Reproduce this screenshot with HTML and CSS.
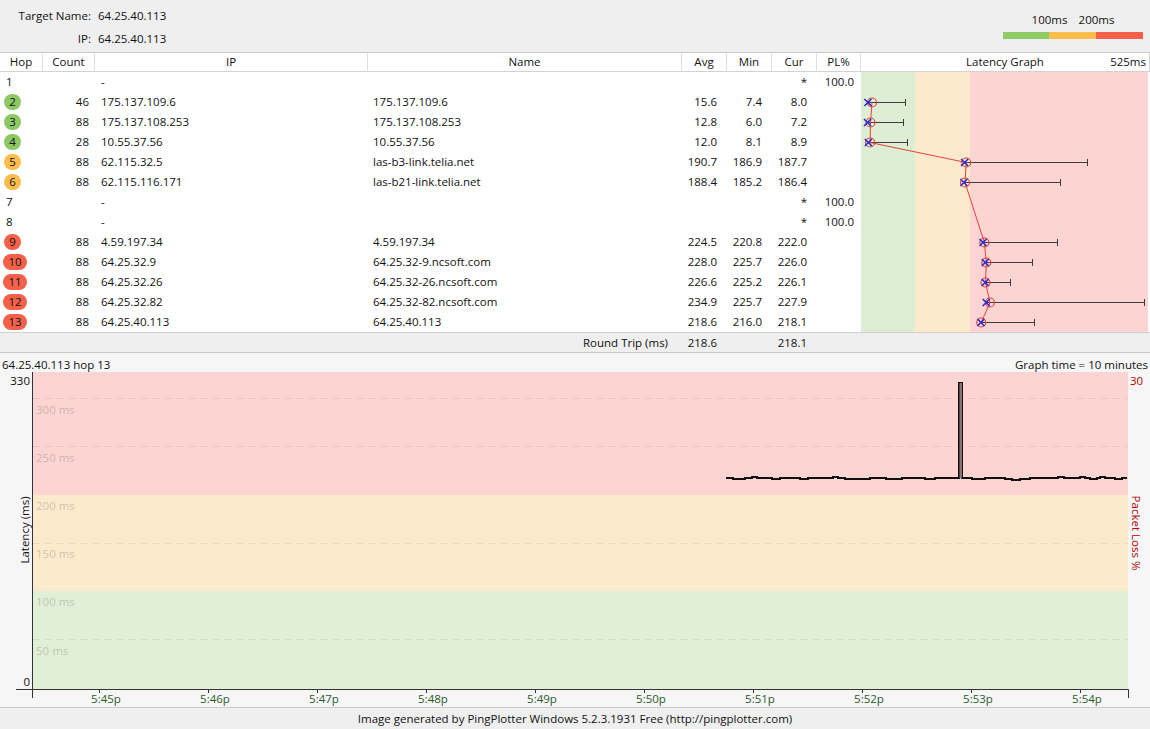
FILE: index.html
```html
<!DOCTYPE html>
<html>
<head>
<meta charset="utf-8">
<title>PingPlotter</title>
<link rel="stylesheet" href="styles.css">
</head>
<body>
<header class="top">
  <div class="target">
    <span class="lbl">Target Name:</span><span class="val">64.25.40.113</span>
    <span class="lbl">IP:</span><span class="val">64.25.40.113</span>
  </div>
  <div class="legend">
    <div class="legend-labels"><span>100ms</span><span>200ms</span></div>
    <div class="legend-bar"><i class="g"></i><i class="o"></i><i class="r"></i></div>
  </div>
</header>

<section class="trace">
  <div class="th">Hop</div>
  <div class="th">Count</div>
  <div class="th">IP</div>
  <div class="th">Name</div>
  <div class="th">Avg</div>
  <div class="th">Min</div>
  <div class="th">Cur</div>
  <div class="th">PL%</div>
  <div class="th th-graph"><span></span><span>Latency Graph</span><span class="max">525ms</span></div>

  <div class="latcell">
    <svg class="lat" width="287" height="260" viewBox="0 0 287 260">
      <rect x="0" y="0" width="54" height="260" fill="#ddeed4"/>
      <rect x="54" y="0" width="55" height="260" fill="#fde9cc"/>
      <rect x="109" y="0" width="178" height="260" fill="#fcd4d1"/>
      <g stroke="#3d3d3d" stroke-width="1" fill="none">
        <path d="M6.6 30.5H44.5M44.5 27V34"/>
        <path d="M5.8 50.5H42.5M42.5 47V54"/>
        <path d="M7 70.5H46.5M46.5 67V74"/>
        <path d="M103.2 90.5H226.5M226.5 87V94"/>
        <path d="M102.2 110.5H199.5M199.5 107V114"/>
        <path d="M121.4 170.5H196.5M196.5 167V174"/>
        <path d="M124 190.5H171.5M171.5 187V194"/>
        <path d="M123.8 210.5H149.5M149.5 207V214"/>
        <path d="M124 230.5H283.5M283.5 227V234"/>
        <path d="M118.8 250.5H173.5M173.5 247V254"/>
      </g>
      <polyline fill="none" stroke="#e8413a" stroke-width="1" points="11,30.5 9.5,50.5 9.1,70.5 105.2,90.5 104,110.5 123.4,170.5 125.3,190.5 124.5,210.5 129,230.5 120.2,250.5"/>
      <g stroke="#d9473c" stroke-width="1.2" fill="none">
        <circle cx="11" cy="30.5" r="4.5"/>
        <circle cx="9.5" cy="50.5" r="4.5"/>
        <circle cx="9.1" cy="70.5" r="4.5"/>
        <circle cx="105.2" cy="90.5" r="4.5"/>
        <circle cx="104" cy="110.5" r="4.5"/>
        <circle cx="123.4" cy="170.5" r="4.5"/>
        <circle cx="125.3" cy="190.5" r="4.5"/>
        <circle cx="124.5" cy="210.5" r="4.5"/>
        <circle cx="129" cy="230.5" r="4.5"/>
        <circle cx="120.2" cy="250.5" r="4.5"/>
      </g>
      <g stroke="#2b2bd6" stroke-width="1.6" fill="none">
        <path d="M3.4 27L10.4 34M10.4 27L3.4 34"/>
        <path d="M3 47L10 54M10 47L3 54"/>
        <path d="M3.9 67L10.9 74M10.9 67L3.9 74"/>
        <path d="M100.1 87L107.1 94M107.1 87L100.1 94"/>
        <path d="M99.4 107L106.4 114M106.4 107L99.4 114"/>
        <path d="M118.5 167L125.5 174M125.5 167L118.5 174"/>
        <path d="M120.7 187L127.7 194M127.7 187L120.7 194"/>
        <path d="M120.7 207L127.7 214M127.7 207L120.7 214"/>
        <path d="M121.7 227L128.7 234M128.7 227L121.7 234"/>
        <path d="M116.4 247L123.4 254M123.4 247L116.4 254"/>
      </g>
    </svg>
  </div>

  <div class="c-hop">1</div><div class="c-count"></div><div class="c-ip">-</div><div class="c-name"></div><div class="c-num"></div><div class="c-num"></div><div class="c-num">*</div><div class="c-pl">100.0</div>
  <div class="c-hop"><span class="badge green">2</span></div><div class="c-count">46</div><div class="c-ip">175.137.109.6</div><div class="c-name">175.137.109.6</div><div class="c-num">15.6</div><div class="c-num">7.4</div><div class="c-num">8.0</div><div class="c-pl"></div>
  <div class="c-hop"><span class="badge green">3</span></div><div class="c-count">88</div><div class="c-ip">175.137.108.253</div><div class="c-name">175.137.108.253</div><div class="c-num">12.8</div><div class="c-num">6.0</div><div class="c-num">7.2</div><div class="c-pl"></div>
  <div class="c-hop"><span class="badge green">4</span></div><div class="c-count">28</div><div class="c-ip">10.55.37.56</div><div class="c-name">10.55.37.56</div><div class="c-num">12.0</div><div class="c-num">8.1</div><div class="c-num">8.9</div><div class="c-pl"></div>
  <div class="c-hop"><span class="badge orange">5</span></div><div class="c-count">88</div><div class="c-ip">62.115.32.5</div><div class="c-name">las-b3-link.telia.net</div><div class="c-num">190.7</div><div class="c-num">186.9</div><div class="c-num">187.7</div><div class="c-pl"></div>
  <div class="c-hop"><span class="badge orange">6</span></div><div class="c-count">88</div><div class="c-ip">62.115.116.171</div><div class="c-name">las-b21-link.telia.net</div><div class="c-num">188.4</div><div class="c-num">185.2</div><div class="c-num">186.4</div><div class="c-pl"></div>
  <div class="c-hop">7</div><div class="c-count"></div><div class="c-ip">-</div><div class="c-name"></div><div class="c-num"></div><div class="c-num"></div><div class="c-num">*</div><div class="c-pl">100.0</div>
  <div class="c-hop">8</div><div class="c-count"></div><div class="c-ip">-</div><div class="c-name"></div><div class="c-num"></div><div class="c-num"></div><div class="c-num">*</div><div class="c-pl">100.0</div>
  <div class="c-hop"><span class="badge red">9</span></div><div class="c-count">88</div><div class="c-ip">4.59.197.34</div><div class="c-name">4.59.197.34</div><div class="c-num">224.5</div><div class="c-num">220.8</div><div class="c-num">222.0</div><div class="c-pl"></div>
  <div class="c-hop"><span class="badge red wide">10</span></div><div class="c-count">88</div><div class="c-ip">64.25.32.9</div><div class="c-name">64.25.32-9.ncsoft.com</div><div class="c-num">228.0</div><div class="c-num">225.7</div><div class="c-num">226.0</div><div class="c-pl"></div>
  <div class="c-hop"><span class="badge red wide">11</span></div><div class="c-count">88</div><div class="c-ip">64.25.32.26</div><div class="c-name">64.25.32-26.ncsoft.com</div><div class="c-num">226.6</div><div class="c-num">225.2</div><div class="c-num">226.1</div><div class="c-pl"></div>
  <div class="c-hop"><span class="badge red wide">12</span></div><div class="c-count">88</div><div class="c-ip">64.25.32.82</div><div class="c-name">64.25.32-82.ncsoft.com</div><div class="c-num">234.9</div><div class="c-num">225.7</div><div class="c-num">227.9</div><div class="c-pl"></div>
  <div class="c-hop"><span class="badge red wide">13</span></div><div class="c-count">88</div><div class="c-ip">64.25.40.113</div><div class="c-name">64.25.40.113</div><div class="c-num">218.6</div><div class="c-num">216.0</div><div class="c-num">218.1</div><div class="c-pl"></div>

  <div class="rt rt-label">Round Trip (ms)</div><div class="rt c-num">218.6</div><div class="rt c-num"></div><div class="rt c-num">218.1</div><div class="rt c-pl"></div><div class="rt"></div>
</section>

<section class="graph">
  <div class="graph-head"><span>64.25.40.113 hop 13</span><span>Graph time = 10 minutes</span></div>
  <svg class="chart" width="1150" height="335" viewBox="0 0 1150 335">
    <rect x="33" y="0" width="1095" height="123" fill="#fcd4d1"/>
    <rect x="33" y="123" width="1095" height="96" fill="#fde9cc"/>
    <rect x="33" y="219" width="1095" height="98" fill="#e0efd6"/>
    <g stroke="#000" stroke-opacity="0.07" stroke-width="1" stroke-dasharray="7 5">
      <path d="M33 26.5H1128"/>
      <path d="M33 74.5H1128"/>
      <path d="M33 171.5H1128"/>
      <path d="M33 267.5H1128"/>
    </g>
    <g class="gl">
      <text x="36" y="42">300 ms</text>
      <text x="36" y="90">250 ms</text>
      <text x="36" y="138">200 ms</text>
      <text x="36" y="186">150 ms</text>
      <text x="36" y="234">100 ms</text>
      <text x="36" y="283">50 ms</text>
    </g>
    <polyline fill="none" stroke="#111" stroke-width="2" points="726,106 733,106 733,107 745,107 745,106 752,106 752,105 757,105 757,106 772,106 772,107 780,107 780,106 800,106 800,107 808,107 808,106 833,106 833,105 838,105 838,106 845,106 845,107 870,107 870,106 886,106 886,107 902,107 902,106 925,106 925,107 935,107 935,106 959,106 959,11 962,11 962,106 972,106 972,107 985,107 985,106 1005,106 1005,107 1012,107 1012,108 1020,108 1020,107 1030,107 1030,106 1058,106 1058,105 1064,105 1064,106 1080,106 1080,105 1085,105 1085,106 1090,106 1090,107 1097,107 1097,106 1100,106 1100,105 1105,105 1105,106 1115,106 1115,107 1122,107 1122,106 1127,106"/>
    <rect x="959.5" y="11" width="2.5" height="95" fill="#8c7272"/>
    <g stroke="#333" stroke-width="1" fill="none">
      <path d="M32.5 0V326"/>
      <path d="M16 317.5H1128.5V326"/>
      <path d="M99.5 317V321M208.5 317V321M317.5 317V321M426.5 317V321M535.5 317V321M644.5 317V321M753.5 317V321M862.5 317V321M971.5 317V321M1080.5 317V321"/>
    </g>
    <g class="tl">
      <text x="106" y="331">5:45p</text>
      <text x="215" y="331">5:46p</text>
      <text x="324" y="331">5:47p</text>
      <text x="433" y="331">5:48p</text>
      <text x="542" y="331">5:49p</text>
      <text x="651" y="331">5:50p</text>
      <text x="760" y="331">5:51p</text>
      <text x="869" y="331">5:52p</text>
      <text x="978" y="331">5:53p</text>
      <text x="1087" y="331">5:54p</text>
    </g>
    <text class="yl" x="30" y="13">330</text>
    <text class="yl" x="30" y="314">0</text>
    <text class="axt" transform="translate(29 158) rotate(-90)">Latency (ms)</text>
    <text class="pl" x="1130" y="13">30</text>
    <text class="plt" transform="translate(1132 161) rotate(90)">Packet Loss %</text>
  </svg>
</section>

<footer class="foot">Image generated by PingPlotter Windows 5.2.3.1931 Free (http://pingplotter.com)</footer>
</body>
</html>
```

FILE: styles.css
```css
* { box-sizing: border-box; margin: 0; padding: 0; }
html, body { width: 1150px; height: 729px; overflow: hidden; }
body {
  font-family: "Open Sans", "Noto Sans", sans-serif;
  font-size: 11.5px;
  color: #111;
  background: #f6f6f6;
}

/* top header */
.top {
  height: 53px;
  background: #efefef;
  border-bottom: 1px solid #c9c9c9;
  display: flex;
  justify-content: space-between;
}
.target {
  display: grid;
  grid-template-columns: 91px auto;
  column-gap: 7px;
  row-gap: 7px;
  padding-top: 8px;
  line-height: 16px;
  align-content: start;
}
.target .lbl { text-align: right; }
.legend { width: 140px; margin-right: 7px; padding-top: 12px; }
.legend-labels { display: flex; padding-left: 23px; line-height: 16px; }
.legend-labels span { width: 47px; text-align: center; }
.legend-bar { display: flex; height: 7px; margin-top: 4px; }
.legend-bar i { display: block; height: 7px; }
.legend-bar .g { width: 46px; background: #8fcb66; }
.legend-bar .o { width: 47px; background: #ffbd4c; }
.legend-bar .r { width: 47px; background: #f6604a; }

/* trace table */
.trace {
  display: grid;
  grid-template-columns: 43px 52px 273px 314px 45px 45px 45px 44px 289px;
  grid-template-rows: 19px repeat(13, 20px) 21px;
  background: #fff;
  white-space: nowrap;
}
.th {
  text-align: center;
  line-height: 18px;
  border-right: 1px solid #dedede;
  border-bottom: 1px solid #d2d2d2;
}
.th-graph {
  display: grid;
  grid-template-columns: 1fr auto 1fr;
  border-right: 1px solid #d2d2d2;
}
.th-graph .max { text-align: right; padding-right: 3px; }
.latcell { grid-column: 9; grid-row: 2 / span 13; }
.lat { display: block; }

.c-hop, .c-count, .c-ip, .c-name, .c-num, .c-pl { line-height: 20px; }
.c-hop { padding-left: 6px; }
.c-count { text-align: right; padding-right: 6px; }
.c-ip { padding-left: 6px; }
.c-name { padding-left: 5px; }
.c-num { text-align: right; padding-right: 10px; }
.c-pl { text-align: right; padding-right: 7px; }

.badge {
  display: inline-block;
  width: 17px;
  height: 16px;
  line-height: 16px;
  border-radius: 8px;
  text-align: center;
  margin-left: -2px;
  vertical-align: middle;
  position: relative;
  top: -1px;
}
.badge.wide { width: 24px; margin-left: -3px; }
.badge.green { background: #8cc864; }
.badge.orange { background: #fdbd4e; }
.badge.red { background: #f4614b; }

.rt {
  background: #efefef;
  border-top: 1px solid #cfcfcf;
  border-bottom: 1px solid #c9c9c9;
  line-height: 19px;
}
.rt-label { grid-column: 1 / span 4; text-align: right; padding-right: 14px; }

/* graph panel */
.graph { background: #f6f6f6; }
.graph-head {
  display: flex;
  justify-content: space-between;
  height: 19px;
  line-height: 19px;
  padding: 2px 2px 0 2px;
}
.chart { display: block; font-family: "Open Sans", "Noto Sans", sans-serif; font-size: 11.5px; }
.chart .gl text { fill: #7a7a7a; fill-opacity: 0.38; }
.chart .tl text { fill: #2d5a2d; text-anchor: middle; }
.chart .yl { fill: #111; text-anchor: end; }
.chart .axt { fill: #111; text-anchor: middle; }
.chart .pl { fill: #b40000; }
.chart .plt { fill: #b40000; text-anchor: middle; }

.foot {
  height: 22px;
  line-height: 21px;
  background: #efefef;
  border-top: 1px solid #c9c9c9;
  text-align: center;
}
```
